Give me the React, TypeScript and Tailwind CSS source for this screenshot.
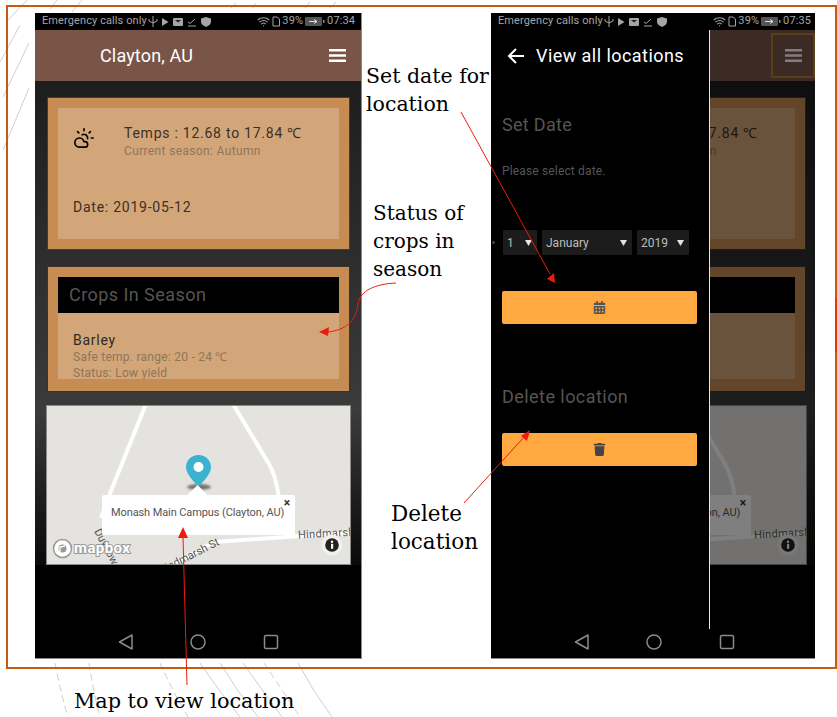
import { CloudSun, Wifi } from "lucide-react";
import { FaCalendarAlt, FaTrash } from "react-icons/fa";

const roboto = "font-['Roboto',sans-serif]";
const slab = "font-['DejaVu_Serif',serif]";

function StatusBar({ time }: { time: string }) {
  return (
    <div className="flex h-[17px] items-center bg-black pl-[7px] pr-[6px] text-[11px] tracking-[0.1px] text-[#a5a5a5]">
      <span>Emergency calls only</span>
      <svg width="10" height="11" viewBox="0 0 10 11" className="ml-[1px]">
        <path d="M5 0v11M1 3v2l4 2 4-2V3" fill="none" stroke="#a5a5a5" strokeWidth="1" />
      </svg>
      <svg width="52" height="10" viewBox="0 0 52 10" className="ml-[2px] shrink-0">
        <path d="M2 1 8.500 5 2 9Z" fill="#a5a5a5" />
        <rect x="13" y="1" width="10" height="8" rx="1" fill="#a5a5a5" />
        <path d="M15 3h6l-3 2.500Z" fill="#222" />
        <path d="M28 5l2 1.500L35 2M28 9h8" fill="none" stroke="#a5a5a5" strokeWidth="1" />
        <path d="M46 0l5 1.500v3.500c0 2-2.500 4-5 5-2.500-1-5-3-5-5V1.500Z" fill="#a5a5a5" />
      </svg>
      <Wifi size={13} className="ml-auto text-[#a5a5a5]" />
      <svg width="10" height="11" viewBox="0 0 10 11" className="ml-[1px]">
        <path d="M2 1h4l2.500 2v7H2Z" fill="none" stroke="#a5a5a5" strokeWidth="1" />
      </svg>
      <span className="ml-[1px]">39%</span>
      <svg width="20" height="9" viewBox="0 0 20 9" className="ml-[2px]">
        <rect x="0" y="0" width="17" height="9" rx="1" fill="#555" />
        <path d="M4 4.500h8M9 2.500l3 2-3 2" stroke="#ddd" strokeWidth="1" fill="none" />
        <rect x="18" y="3" width="1.500" height="3" fill="#888" />
      </svg>
      <span className="ml-[2px]">{time}</span>
    </div>
  );
}

function WeatherCard() {
  return (
    <div className="ml-px h-[153px] w-[303px] border border-[#4a3a28] bg-[#c68c53] p-[10px]">
      <div className="h-[131px] bg-[#d2a679] pl-[15px] text-[14px] tracking-[0.75px] text-[#3a3026]">
        <div className="flex pt-[16px]">
          <CloudSun size={22} strokeWidth={1.8} className="mt-[3px] text-black" />
          <div className="ml-[29px]">
            <p className="leading-[18px]">Temps : 12.68 to 17.84 ℃</p>
            <p className="mt-px text-[12px] leading-[16px] tracking-[0.35px] text-[#8f7558]">Current season: Autumn</p>
          </div>
        </div>
        <p className="mt-[39px] leading-[18px]">Date: 2019-05-12</p>
      </div>
    </div>
  );
}

function CropsCard() {
  return (
    <div className="ml-px mt-[16px] h-[126px] w-[303px] border border-[#3f3226] bg-[#c68c53] p-[10px]">
      <div className="flex h-[36px] items-center bg-black pb-px pl-[11px] text-[18px] tracking-[0.45px] text-[#555555]">
        Crops In Season
      </div>
      <div className="h-[66px] overflow-hidden bg-[#d2a679] pl-[15px] pt-[18px]">
        <p className="text-[14px] leading-[18px] tracking-[0.75px] text-[#2f2a22]">Barley</p>
        <p className="text-[12px] leading-[16px] tracking-[0.25px] text-[#8f7558]">Safe temp. range: 20 - 24 ℃</p>
        <p className="text-[12px] leading-[16px] tracking-[0.25px] text-[#8f7558]">Status: Low yield</p>
      </div>
    </div>
  );
}

function MapCard() {
  return (
    <div className="relative mt-[13px] h-[160px] w-[305px] overflow-hidden border border-[#8a8a88] bg-[#e5e3df]">
      <svg width="305" height="160" viewBox="0 0 305 160" className="absolute left-0 top-0">
        <path d="M99-2 62 90 54 112" fill="none" stroke="#fff" strokeWidth="4" />
        <path d="M186-2 222 58Q229 70 232 92" fill="none" stroke="#fff" strokeWidth="4" />
        <path d="M120 162 167 136 254 130 305 127" fill="none" stroke="#fff" strokeWidth="4" />
      </svg>
      <span className="absolute left-[50px] top-[118px] origin-left rotate-[62deg] text-[11px] leading-none text-[#555]">Duyhow Rd</span>
      <span className="absolute left-[112px] top-[160px] origin-left rotate-[-27deg] text-[11px] leading-none text-[#555]">Hindmarsh St</span>
      <span className="absolute left-[251px] top-[122px] rotate-[-3deg] text-[11px] leading-none tracking-[0.3px] text-[#555]">Hindmarsh</span>

      <div className="absolute left-[140px] top-[78px] h-[6px] w-[24px] rounded-[50%] bg-[#77726a] blur-[1px]" />
      <svg width="25" height="33" viewBox="0 0 25 33" className="absolute left-[139px] top-[49px]">
        <path d="M12.500 0C5.600 0 0 5.400 0 12.200 0 19 8 26.500 12.500 32 17 26.500 25 19 25 12.200 25 5.400 19.400 0 12.500 0Z" fill="#3bb2d0" />
        <circle cx="12.500" cy="12" r="5" fill="#fff" />
      </svg>

      <div className="absolute left-[143px] top-[82px] size-[15px] rotate-45 bg-white" />
      <div className="absolute left-[55px] top-[89px] h-[40px] w-[193px] rounded-[2px] bg-white pl-[9px] pt-[10px] text-[11px] leading-[16px] tracking-[-0.1px] text-[#555]">
        Monash Main Campus (Clayton, AU)
        <span className="absolute right-[5px] top-[2px] text-[12px] font-bold leading-[12px] text-[#333]">×</span>
      </div>

      <div className="absolute bottom-[5px] left-[5px] flex items-center">
        <svg width="21" height="21" viewBox="0 0 21 21">
          <circle cx="10.500" cy="10.500" r="9" fill="#fff" stroke="#999" strokeWidth="1.500" />
          <circle cx="10.500" cy="10.500" r="4" fill="#999" />
          <path d="M8 14 8 9 13 8" fill="none" stroke="#fff" strokeWidth="1.300" />
        </svg>
        <span className="ml-[1px] text-[15px] font-bold leading-none tracking-[0.4px] text-white [-webkit-text-stroke:2px_#9a9a9a] [paint-order:stroke_fill]">mapbox</span>
      </div>

      <svg width="22" height="22" viewBox="0 0 22 22" className="absolute bottom-[8px] right-[7px]">
        <circle cx="11" cy="11" r="10.500" fill="#f1f0ee" />
        <circle cx="11" cy="11" r="6.800" fill="#222" />
        <rect x="10" y="9.800" width="2.200" height="5" fill="#fff" />
        <circle cx="11" cy="7.800" r="1.200" fill="#fff" />
      </svg>
    </div>
  );
}

function NavBar() {
  return (
    <svg width="326" height="30" viewBox="0 0 326 30" className="block">
      <path d="M97 7 84.500 14 97 21Z" fill="none" stroke="#8a8a8a" strokeWidth="1.500" strokeLinejoin="round" />
      <circle cx="163" cy="14" r="7" fill="none" stroke="#8a8a8a" strokeWidth="1.500" />
      <rect x="229.500" y="7.500" width="13" height="13" rx="1.500" fill="none" stroke="#8a8a8a" strokeWidth="1.500" />
    </svg>
  );
}

function Screen({ time, focused }: { time: string; focused?: boolean }) {
  return (
    <div className="flex h-[646px] w-[326px] flex-col bg-black">
      <StatusBar time={time} />
      <div className="flex h-[51px] items-center justify-between bg-[#795548] pl-[65px] pr-[2px] text-[18px] tracking-[0.15px] text-white">
        <span>Clayton, AU</span>
        <div className={`flex h-[45px] w-[44px] items-center justify-center border-2 ${focused ? "border-[#b87c28]" : "border-transparent"}`}>
          <svg width="17" height="13" viewBox="0 0 17 13">
            <path d="M0 0h17v2.600H0ZM0 5.200h17v2.600H0ZM0 10.400h17V13H0Z" fill="#fff" />
          </svg>
        </div>
      </div>
      <div className="h-[484px] bg-[linear-gradient(180deg,#1d1d1d_0%,#3a3a3a_66%,#3c3c3c_68%,#1e1e1e_86%,#0a0a0a_100%)] pl-[11px] pt-[16px]">
        <WeatherCard />
        <CropsCard />
        <MapCard />
      </div>
      <div className="mt-auto border-b border-[#8a8a8a]">
        <NavBar />
      </div>
    </div>
  );
}

function DateSelect({ label, width }: { label: string; width: string }) {
  return (
    <div className={`flex h-[25px] items-center justify-between bg-[#1c1c1c] pl-[4px] pr-[5px] text-[12px] text-[#bdbdbd] ${width}`}>
      <span>{label}</span>
      <svg width="7" height="6" viewBox="0 0 7 6">
        <path d="M0 0h7L3.500 6Z" fill="#e5e5e5" />
      </svg>
    </div>
  );
}

function Drawer() {
  return (
    <div className="absolute left-0 top-[17px] h-[599px] w-[219px] border-r border-[#e6e6e6] bg-black">
      <div className="flex h-[51px] items-center pl-[16px] text-[18px] tracking-[0.45px] text-white">
        <svg width="17" height="16" viewBox="0 0 17 16" fill="none" stroke="#fff" strokeWidth="2">
          <path d="M17 8H2M9 1 2 8l7 7" />
        </svg>
        <span className="ml-[12px]">View all locations</span>
      </div>
      <div className="pl-[11px]">
        <h2 className="mt-[33px] text-[18px] leading-[22px] tracking-[0.3px] text-[#555555]">Set Date</h2>
        <p className="mt-[28px] text-[12px] leading-[14px] tracking-[0.15px] text-[#555555]">Please select date.</p>
        <div className="mt-[52px] flex gap-[5px] pl-px">
          <DateSelect label="1" width="w-[34px]" />
          <DateSelect label="January" width="w-[90px]" />
          <DateSelect label="2019" width="w-[52px]" />
        </div>
        <div className="mt-[36px] flex h-[33px] w-[195px] items-center justify-center rounded-[2px] bg-[#ffa940]">
          <FaCalendarAlt size={13} className="text-[#555]" />
        </div>
        <h2 className="mt-[62px] text-[18px] leading-[22px] tracking-[0.45px] text-[#555555]">Delete location</h2>
        <div className="mt-[25px] flex h-[33px] w-[195px] items-center justify-center rounded-[2px] bg-[#ffa940]">
          <FaTrash size={13} className="text-[#444]" />
        </div>
      </div>
      <span className="absolute left-[1px] top-[211px] size-[3px] rounded-full bg-[#444]" />
    </div>
  );
}

function Note({ lines, className }: { lines: string[]; className: string }) {
  return (
    <div className={`absolute leading-[28px] text-black ${slab} ${className}`}>
      {lines.map((line) => (
        <div key={line}>{line}</div>
      ))}
    </div>
  );
}

// faint swooshes behind the slide, only visible outside the phones
function BackgroundLines() {
  return (
    <svg width="837" height="717" viewBox="0 0 837 717" className="absolute left-0 top-0">
      <g fill="none" stroke="#cfcfcf" strokeWidth="1">
        <path d="M27 0 8 20M57 0 50 9M82 0 72 12M29 43 3 97M29 88 3 150M20 25 0 62" />
        <path d="M231 8 236 3M253 8 256 3M305 8 310 2M330 8 336 2" />
        <path d="M55 663Q60 690 68 717M89 663Q93 690 100 717M160 663Q172 690 188 717" strokeDasharray="7 4" />
        <path d="M200 663Q218 690 240 717M220 663Q236 690 258 717M243 663Q262 690 282 717M298 663Q312 690 332 717" />
        <path d="M264 663Q282 690 300 717" strokeDasharray="7 4" />
      </g>
    </svg>
  );
}

function Arrows() {
  return (
    <svg width="837" height="717" viewBox="0 0 837 717" className="absolute left-0 top-0">
      <g fill="none" stroke="#ee1c0c" strokeWidth="1">
        <path d="M461 112 550 274" />
        <path d="M396 283C376 284 360 290 358 304 356 322 345 330 328 332" />
        <path d="M464 503 525 436" />
        <path d="M187 685 183 537" />
        <path d="M836 298V352" />
      </g>
      <g fill="#ee1c0c">
        <path d="M555 283 547 279 554 273Z" />
        <path d="M319 332 329 327 328 336Z" />
        <path d="M530 430 521 436 527 441Z" />
        <path d="M183 527 178 538 188 538Z" />
      </g>
    </svg>
  );
}

export default function App() {
  return (
    <div className={`relative h-[717px] w-[837px] overflow-hidden bg-white ${roboto}`}>
      <BackgroundLines />
      <div className="relative ml-[6px] mt-[5px] flex h-[664px] w-[831px] gap-[129px] border-2 border-[#c55a11] pl-[27px] pt-[6px]">
        <div className="h-[646px] w-[327px] border-r border-[#8a8a8a]">
          <Screen time="07:34" />
        </div>
        <div className="relative h-[646px] w-[324px] overflow-hidden">
          <Screen time="07:35" focused />
          <div className="absolute inset-x-0 top-[17px] h-[585px] bg-black/50" />
          <Drawer />
        </div>
      </div>
      <Note lines={["Set date for", "location"]} className="left-[366px] top-[62px] text-[20.5px]" />
      <Note lines={["Status of", "crops in", "season"]} className="left-[373px] top-[199px] text-[20px]" />
      <Note lines={["Delete", "location"]} className="left-[391px] top-[500px] text-[21.5px]" />
      <Note lines={["Map to view location"]} className="left-[74px] top-[687px] text-[20.8px]" />
      <Arrows />
    </div>
  );
}
